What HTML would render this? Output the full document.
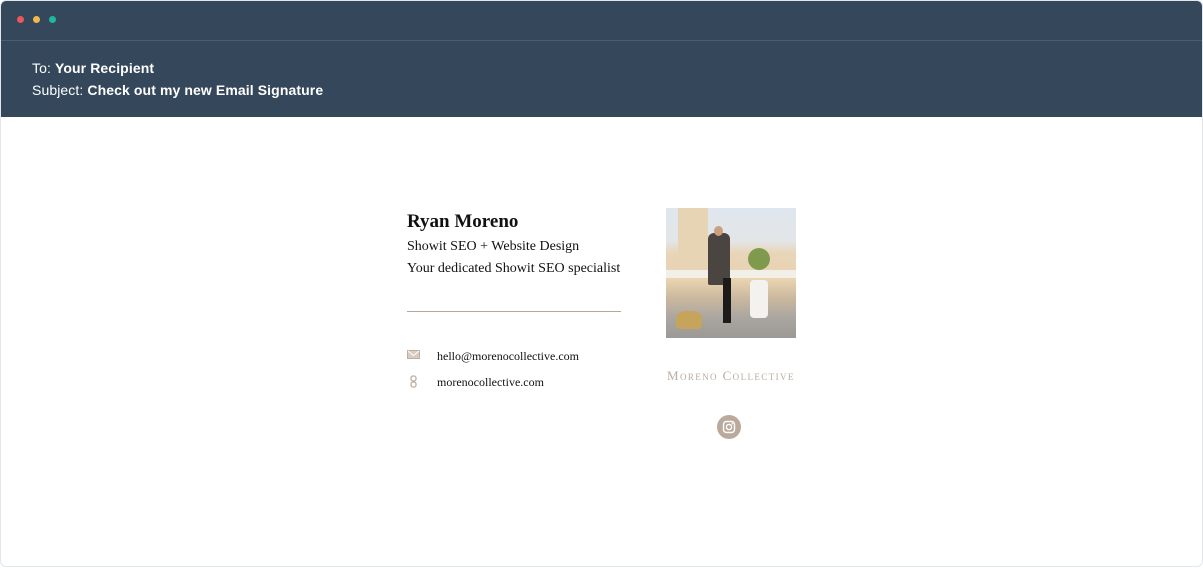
<!DOCTYPE html><html><head><style>
body{margin:0;width:1203px;height:568px;background:#fff;overflow:hidden;position:relative;font-family:"Liberation Serif",serif}
.win{position:absolute;left:0;top:0;width:1201px;height:565px;border:1px solid #e3e6ea;border-radius:6px;overflow:hidden}
.hdr{position:absolute;left:0;top:-1px;width:1201px;height:117px;background:#34475b}
.dot{position:absolute;top:16px;width:7px;height:7px;border-radius:50%}
.line{position:absolute;top:40px;left:0;width:100%;height:1px;background:#4b5d70}
.h{position:absolute;left:31px;color:#fff;font-family:"Liberation Sans",sans-serif;font-size:14px;letter-spacing:0.1px}
.h b{font-weight:bold}
.t{position:absolute;color:#111;white-space:nowrap}
</style></head><body><div class="win">
<div class="hdr">
<div class="dot" style="left:16px;background:#e9585a"></div>
<div class="dot" style="left:32px;background:#f2b84f"></div>
<div class="dot" style="left:48px;background:#1fb99a"></div>
<div class="line"></div>
<div class="h" style="top:60px">To: <b>Your Recipient</b></div>
<div class="h" style="top:82px">Subject: <b>Check out my new Email Signature</b></div>
</div>
<div class="t" style="left:406px;top:210px;font-size:19px;font-weight:bold">Ryan Moreno</div>
<div class="t" style="left:406px;top:238px;font-size:14px">Showit SEO + Website Design</div>
<div class="t" style="left:406px;top:260px;font-size:14px">Your dedicated Showit SEO specialist</div>
<div style="position:absolute;left:406px;top:310px;width:214px;height:1px;background:#b5a898"></div>
<svg style="position:absolute;left:406px;top:349px" width="14" height="10"><rect x="0.5" y="0.5" width="12" height="8" fill="#d8cbc0" stroke="#bfae9f"/><path d="M1 1l5.5 4.5L12 1" stroke="#fff" fill="none"/></svg>
<svg style="position:absolute;left:409px;top:374px" width="8" height="14"><rect x="1" y="1" width="5" height="5" rx="2" fill="none" stroke="#bfae9f" stroke-width="1.3"/><rect x="1" y="7" width="5" height="5" rx="2" fill="none" stroke="#bfae9f" stroke-width="1.3"/></svg>
<div class="t" style="left:436px;top:348px;font-size:12px">hello@morenocollective.com</div>
<div class="t" style="left:436px;top:374px;font-size:12px">morenocollective.com</div>
<div style="position:absolute;left:665px;top:207px;width:130px;height:130px;background:linear-gradient(180deg,#dfe6ee 0%,#e3e6e8 25%,#e8d5b8 35%,#e9d3b0 55%,#c9b79e 70%,#a9a5a0 85%,#9c9a96 100%);overflow:hidden">
<div style="position:absolute;left:12px;top:0;width:30px;height:60px;background:#e6d4b5"></div>
<div style="position:absolute;left:0;top:62px;width:130px;height:8px;background:#f2efe8"></div>
<div style="position:absolute;left:42px;top:25px;width:22px;height:52px;background:#4a4540;border-radius:6px 6px 2px 2px"></div>
<div style="position:absolute;left:48px;top:18px;width:9px;height:10px;background:#c8a080;border-radius:50%"></div>
<div style="position:absolute;left:57px;top:70px;width:8px;height:45px;background:#1d1b1a"></div>
<div style="position:absolute;left:84px;top:72px;width:18px;height:38px;background:#f4f2ee;border-radius:4px"></div>
<div style="position:absolute;left:82px;top:40px;width:22px;height:22px;background:#7f9a4d;border-radius:50%"></div>
<div style="position:absolute;left:10px;top:103px;width:26px;height:18px;background:#c6a45b;border-radius:40% 40% 20% 20%"></div>
</div>
<div class="t" style="left:666px;top:367px;font-size:13px;font-variant:small-caps;letter-spacing:1.4px;color:#b8aca3">Moreno Collective</div>
<div style="position:absolute;left:716px;top:414px;width:24px;height:24px;border-radius:50%;background:#bba99c"></div>
<svg style="position:absolute;left:721px;top:419px" width="14" height="14"><rect x="1.5" y="1.5" width="11" height="11" rx="3" fill="none" stroke="#fff" stroke-width="1.4"/><circle cx="7" cy="7" r="2.6" fill="none" stroke="#fff" stroke-width="1.4"/><circle cx="10.3" cy="3.8" r=".8" fill="#fff"/></svg>
</div></body></html>
